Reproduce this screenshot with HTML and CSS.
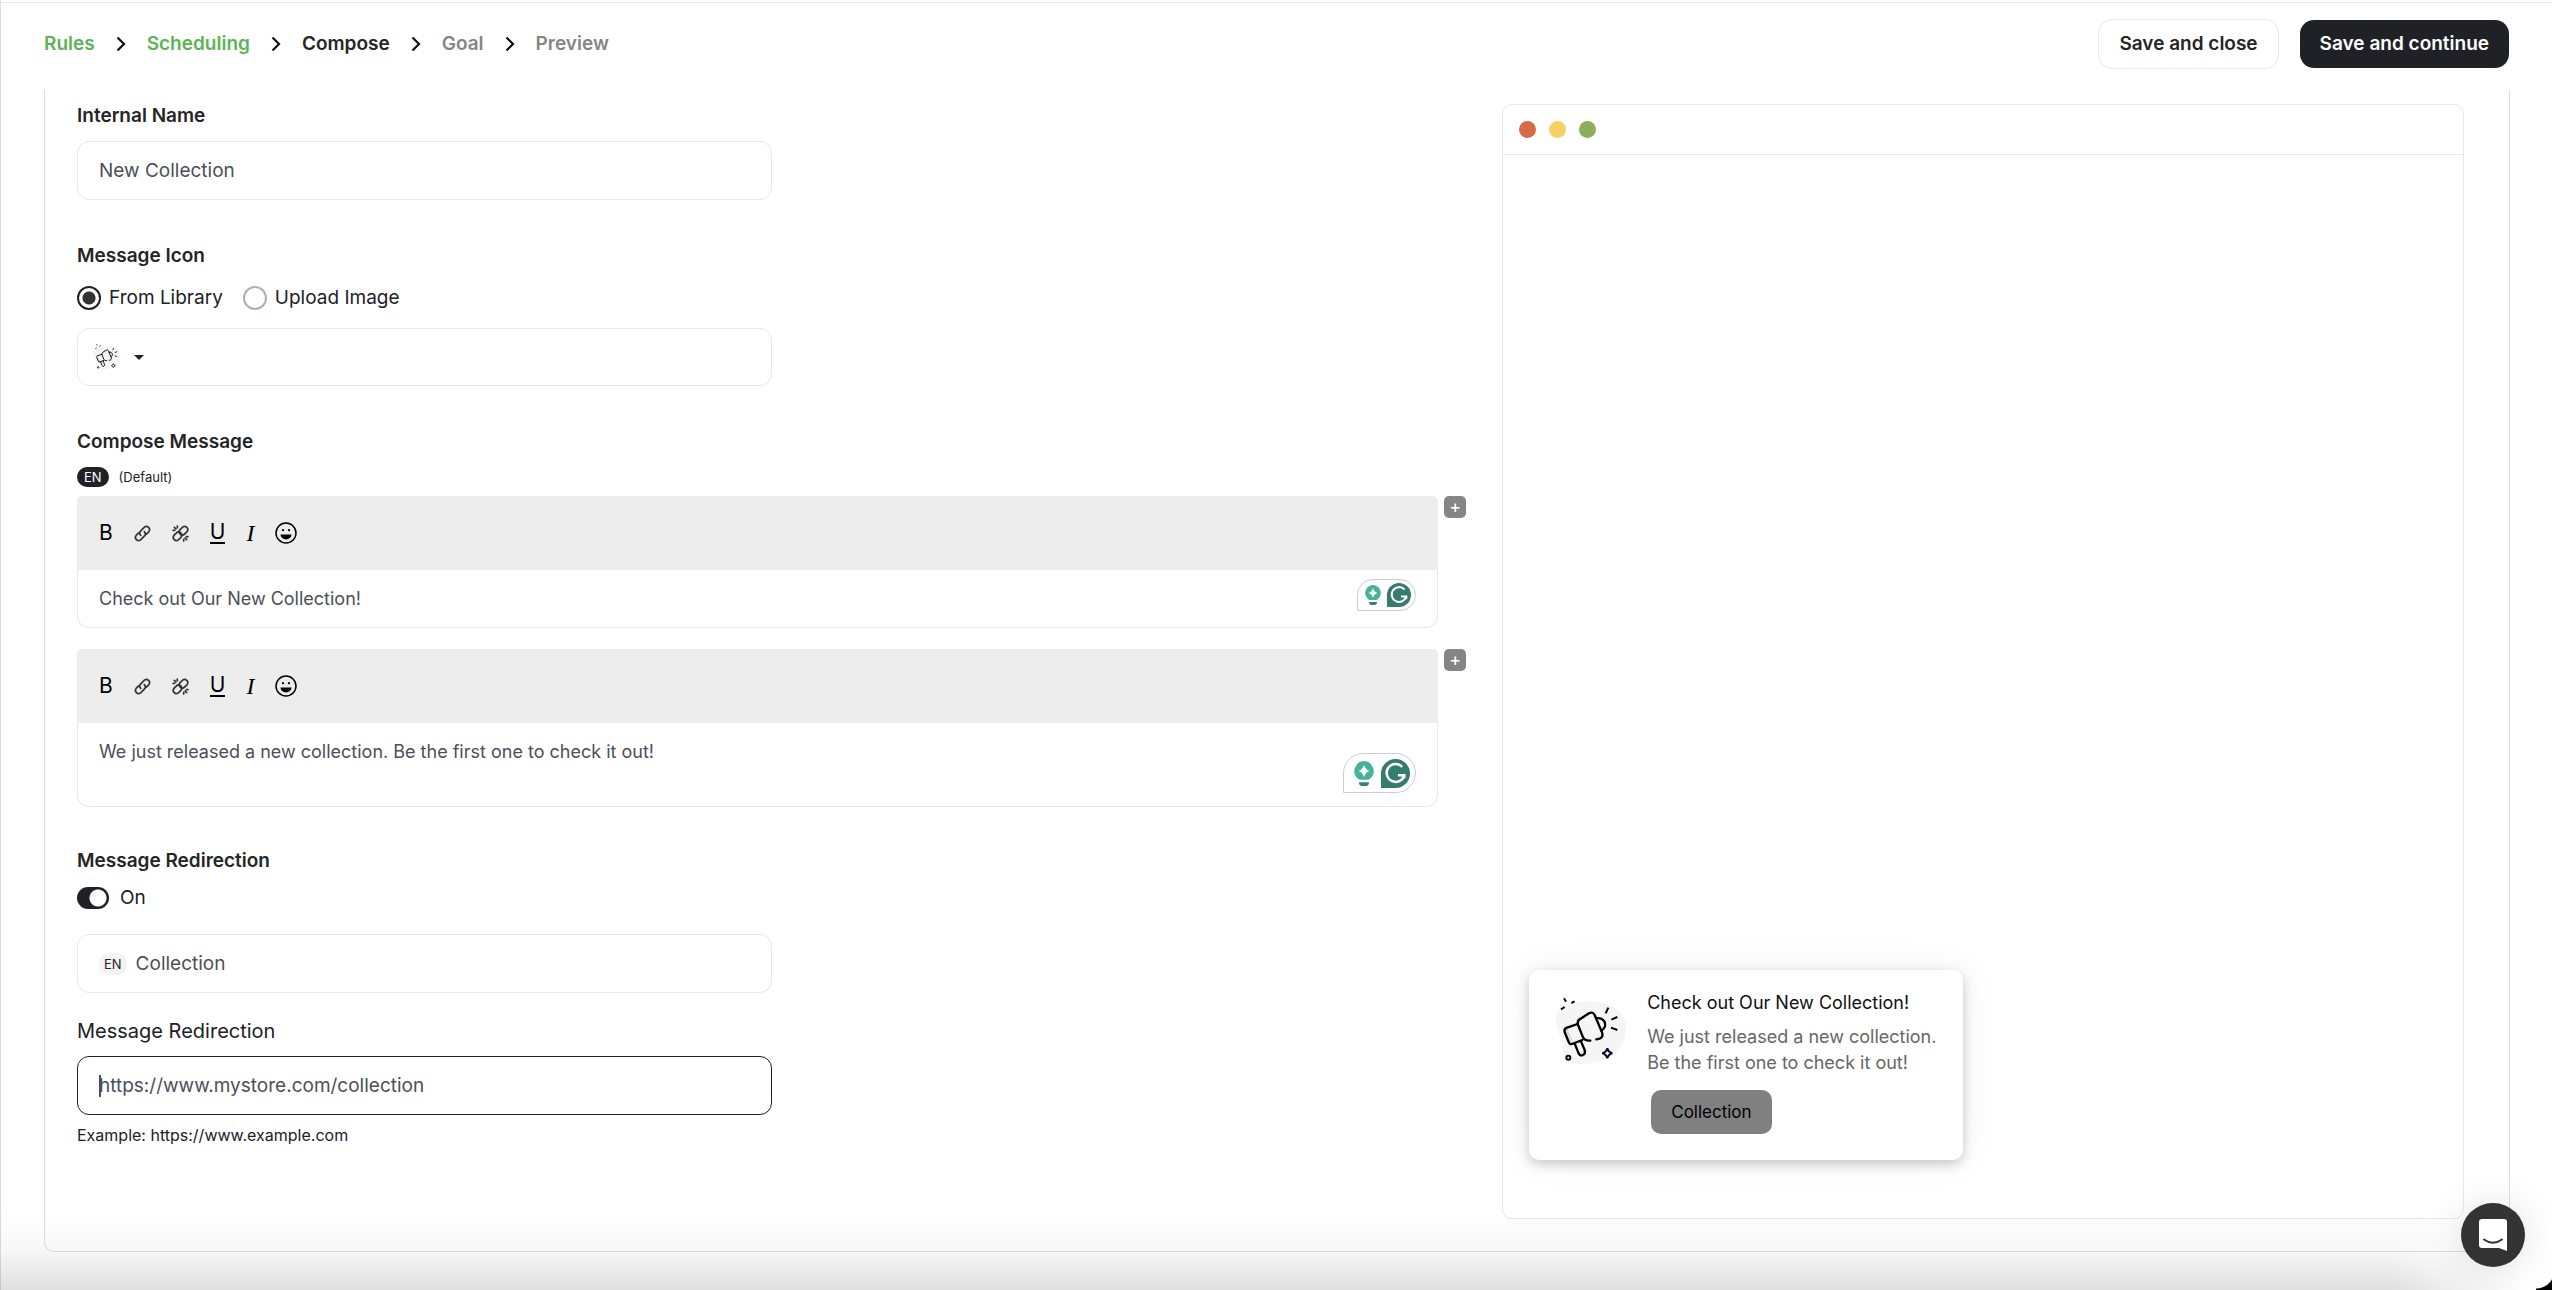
FILE: index.html
```html
<!DOCTYPE html>
<html lang="en">
<head>
    <meta charset="UTF-8">
    <meta name="viewport" content="width=device-width, initial-scale=1.0">
    <title>Compose Message</title>

    <link rel="stylesheet" href="styles.css">
</head>
<body>
    <!-- shared icons -->
    <svg class="sprite" aria-hidden="true">
        <symbol id="chevron" viewBox="0 0 10 16">
            <path d="M1.500 1.500L8 8L1.500 14.500" fill="none" stroke="#111" stroke-width="2.200"/>
        </symbol>
        <symbol id="megaphone" viewBox="168 138 216 210">
            <path d="M171 215C170 180 192 160 230 157C262 153 300 154 325 163C362 178 384 205 381 240C378 285 350 320 312 330C280 340 245 347 220 340C192 332 192 312 192 288C190 262 172 245 171 215Z" fill="#f5f5f5"/>
            <path d="M204 234L222 272L212 276L200 242Z" fill="#ddd"/>
            <g fill="none" stroke="#000" stroke-width="7" stroke-linecap="round" stroke-linejoin="round">
                <path d="M236 222L204 233Q194 237 197 246L209 276Q212 285 222 281L250 270"/>
                <path d="M236 222Q235 211 245 206L270 190Q281 184 287 195L309 247Q314 262 302 266L292 268"/>
                <path d="M236 222L252 262Q257 273 274 272"/>
                <path d="M291 205Q308 202 317 216Q323 232 307 242"/>
                <path d="M228 283L238 308Q243 319 252 315Q260 311 257 300L246 274"/>
            </g>
            <g fill="none" stroke="#000" stroke-width="6">
                <path d="M320 190L328 173M337 209L355 201M336 233L355 240"/>
            </g>
            <g fill="none" stroke="#0b0b26" stroke-width="6">
                <path d="M195 145L201 155M217 159L227 154M186 178L197 171"/>
                <circle cx="208" cy="323" r="6"/>
                <path d="M325 295Q328 307 340 310Q328 313 325 325Q322 313 310 310Q322 307 325 295Z" stroke-width="6"/>
            </g>
        </symbol>
        <symbol id="link" viewBox="0 0 16 16">
            <g fill="none" stroke="#333" stroke-width="1.600" stroke-linecap="round">
                <path d="M6.300 9.700A3 3 0 0 1 6.300 5.500L9.800 2A3 3 0 0 1 14 6.200L11.700 8.500"/>
                <path d="M9.700 6.300A3 3 0 0 1 9.700 10.500L6.200 14A3 3 0 0 1 2 9.800L4.300 7.500"/>
            </g>
        </symbol>
        <symbol id="unlink" viewBox="0 0 16 16">
            <g fill="none" stroke="#333" stroke-width="1.600" stroke-linecap="round">
                <path d="M7.600 4.400L10 2A3 3 0 0 1 14.200 6.200L11.800 8.600A2.600 2.600 0 0 1 7.600 8.400A2.600 2.600 0 0 1 7.600 4.400"/>
                <path d="M8.400 11.600L6 14A3 3 0 0 1 1.800 9.800L4.200 7.400A2.600 2.600 0 0 1 8.400 7.600A2.600 2.600 0 0 1 8.400 11.600"/>
                <path d="M1 5H2.500M2.200 2.200L3.600 3.600M5 1V2.500M15 11H13.500M13.800 13.800L12.400 12.400M11 15V13.500"/>
            </g>
        </symbol>
        <symbol id="smile" viewBox="0 0 22 22">
            <circle cx="11" cy="11" r="10" fill="none" stroke="#000" stroke-width="1.500"/>
            <path d="M5.500 12.500H16.500A5.500 5 0 0 1 5.500 12.500Z"/>
            <circle cx="8" cy="8.200" r="1.100"/>
            <circle cx="14" cy="8.200" r="1.100"/>
        </symbol>
        <symbol id="bulb" viewBox="0 0 16 20">
            <path d="M8 0A8 8 0 0 1 13 14Q12 15 11 15H5Q4 15 3 14A8 8 0 0 1 8 0Z" fill="#44b39a"/>
            <path d="M8 3Q9 7 12.500 8Q9 9 8 13Q7 9 3.500 8Q7 7 8 3Z" fill="#fff"/>
            <path d="M4 17H12Q12 20 9.500 20H6.500Q4 20 4 17Z" fill="#35806f"/>
        </symbol>
        <symbol id="grammar" viewBox="0 0 24 24">
            <path d="M0 24V12A12 12 0 1 1 12 24Z" fill="#367c6e"/>
            <path d="M17.500 6.500A7.400 7.400 0 1 0 19.200 13.500H14M19.300 13.500V16" fill="none" stroke="#fff" stroke-width="2"/>
        </symbol>
    </svg>

    <header class="topbar">
        <nav class="steps">
            <a href="#" class="done">Rules</a>
            <svg><use href="#chevron"/></svg>
            <a href="#" class="done">Scheduling</a>
            <svg><use href="#chevron"/></svg>
            <a href="#" class="current">Compose</a>
            <svg><use href="#chevron"/></svg>
            <a href="#">Goal</a>
            <svg><use href="#chevron"/></svg>
            <a href="#">Preview</a>
        </nav>
        <div class="actions">
            <button type="button" class="btn">Save and close</button>
            <button type="submit" form="messageForm" class="btn btn-dark">Save and continue</button>
        </div>
    </header>

    <main class="panel">
        <form id="messageForm">
            <section class="group">
                <label class="title" for="internalName">Internal Name</label>
                <input type="text" class="field" id="internalName" value="New Collection">
            </section>

            <section class="group">
                <h2 class="title">Message Icon</h2>
                <div class="radios">
                    <input type="radio" name="icon" id="library" checked>
                    <label for="library">From Library</label>
                    <input type="radio" name="icon" id="upload">
                    <label for="upload">Upload Image</label>
                </div>
                <button type="button" class="field icon-picker" aria-label="Choose icon">
                    <svg class="picked"><use href="#megaphone"/></svg>
                    <span class="caret"></span>
                </button>
            </section>

            <section class="group compose-group">
                <h2 class="title">Compose Message</h2>
                <div class="language"><span class="pill">EN</span> (Default)</div>

                <div class="editor-row">
                    <div class="editor">
                        <div class="toolbar">
                            <button type="button">B</button>
                            <button type="button" aria-label="Link"><svg class="small"><use href="#link"/></svg></button>
                            <button type="button" aria-label="Unlink"><svg class="small"><use href="#unlink"/></svg></button>
                            <button type="button" class="underline">U</button>
                            <button type="button" class="italic">I</button>
                            <button type="button" aria-label="Emoji"><svg class="emoji"><use href="#smile"/></svg></button>
                        </div>
                        <input type="text" class="message" aria-label="Message title" value="Check out Our New Collection!">
                        <div class="checker">
                            <svg class="bulb"><use href="#bulb"/></svg>
                            <svg class="grammar"><use href="#grammar"/></svg>
                        </div>
                    </div>
                    <button type="button" class="add" aria-label="Add">+</button>
                </div>

                <div class="editor-row">
                    <div class="editor">
                        <div class="toolbar">
                            <button type="button">B</button>
                            <button type="button" aria-label="Link"><svg class="small"><use href="#link"/></svg></button>
                            <button type="button" aria-label="Unlink"><svg class="small"><use href="#unlink"/></svg></button>
                            <button type="button" class="underline">U</button>
                            <button type="button" class="italic">I</button>
                            <button type="button" aria-label="Emoji"><svg class="emoji"><use href="#smile"/></svg></button>
                        </div>
                        <textarea class="message" aria-label="Message text">We just released a new collection. Be the first one to check it out!</textarea>
                        <div class="checker large">
                            <svg class="bulb"><use href="#bulb"/></svg>
                            <svg class="grammar"><use href="#grammar"/></svg>
                        </div>
                    </div>
                    <button type="button" class="add" aria-label="Add">+</button>
                </div>
            </section>

            <section class="group">
                <h2 class="title">Message Redirection</h2>
                <div class="switch">
                    <input type="checkbox" id="redirect" checked>
                    <label for="redirect">On</label>
                </div>
                <div class="field tagged">
                    <span class="tag">EN</span>
                    <input type="text" aria-label="Button text" value="Collection">
                </div>
                <label class="subtitle" for="url">Message Redirection</label>
                <input type="text" class="field active" id="url" placeholder="https://www.mystore.com/collection">
                <p class="hint">Example: https://www.example.com</p>
            </section>
        </form>

        <aside class="preview">
            <div class="dots">
                <span class="red"></span>
                <span class="yellow"></span>
                <span class="green"></span>
            </div>
            <div class="popup">
                <svg class="popup-icon"><use href="#megaphone"/></svg>
                <div>
                    <h3>Check out Our New Collection!</h3>
                    <p>We just released a new collection. Be the first one to check it out!</p>
                    <button type="button">Collection</button>
                </div>
            </div>
        </aside>
    </main>

    <div class="fade"></div>
    <div class="corner"></div>
    <button type="button" class="chat" aria-label="Open chat">
        <svg viewBox="0 0 28 32">
            <path d="M3 0H25Q28 0 28 3V32L20 29H3Q0 29 0 26V3Q0 0 3 0Z" fill="#fff"/>
            <path d="M5 20.500Q14 27 23 20.500" fill="none" stroke="#333" stroke-width="2" stroke-linecap="round"/>
        </svg>
    </button>
</body>
</html>
```
FILE: styles.css
```css
* {
    margin: 0;
    padding: 0;
    box-sizing: border-box;
}

body {
    display: flex;
    flex-direction: column;
    min-height: 100vh;
    padding-top: 2px;
    border-left: 1px solid #ddd;
    background-color: #fff;
    color: #202127;
    font-family: Inter, sans-serif;
    font-size: 18px;
    line-height: 24px;
}

input, button, textarea {
    font: inherit;
    color: inherit;
}

button {
    border: none;
    background: none;
    cursor: pointer;
}

svg {
    display: block;
}

.sprite {
    position: absolute;
    width: 0;
    height: 0;
}

/* header */
.topbar {
    display: flex;
    justify-content: space-between;
    align-items: center;
    height: 88px;
    padding: 0 43px 6px;
    border-top: 1px solid #e8e8e8;
}

.steps, .actions {
    display: flex;
    align-items: center;
    gap: 21px;
}

.steps a {
    color: #858585;
    font-size: 19px;
    font-weight: 600;
    text-decoration: none;
}

.steps svg {
    width: 10px;
    height: 16px;
}

.steps .done {
    color: #5cb456;
}

.steps .current {
    color: #252525;
}

.btn {
    height: 50px;
    padding: 0 20px;
    border: 1px solid #e8e8e8;
    border-radius: 14px;
    color: #252525;
    font-size: 19px;
    font-weight: 600;
}

.btn-dark {
    height: 48px;
    border: none;
    background-color: #202127;
    color: #fff;
}

/* main panel */
.panel {
    display: grid;
    grid-template-columns: 13fr 9fr;
    gap: 36px;
    flex-grow: 1;
    margin: 0 42px 38px 43px;
    padding: 14px 45px 32px 32px;
    border: 1px solid #ddd;
    border-top: none;
    border-radius: 0 0 10px 10px;
}

.group {
    display: flex;
    flex-direction: column;
    align-items: flex-start;
    margin-bottom: 44px;
}

.compose-group {
    margin-bottom: 21px;
}

.title {
    margin-bottom: 13px;
    color: #252525;
    font-size: 19px;
    font-weight: 600;
}

.field {
    width: 50%;
    height: 59px;
    padding: 0 21px;
    border: 1px solid #e8e8e8;
    border-radius: 12px;
    outline: none;
    background-color: #fff;
    color: #4b5058;
    font-size: 19px;
}

.radios {
    display: flex;
    align-items: center;
    margin: 5px 0 18px;
    font-size: 19px;
}

.radios input {
    appearance: none;
    width: 24px;
    height: 24px;
    border: 2px solid #aab0bc;
    border-radius: 50%;
}

.radios input:checked {
    border-color: #202127;
    background: radial-gradient(circle, #333 6px, #fff 7px);
}

.radios label {
    margin: 0 20px 0 8px;
}

.icon-picker {
    display: flex;
    align-items: center;
    gap: 13px;
    height: 58px;
    padding: 0 15px;
}

.picked {
    width: 28px;
    height: 28px;
}

.caret {
    border: 5px solid transparent;
    border-top-color: #202127;
    border-bottom: none;
}

/* editors */
.language {
    display: flex;
    align-items: center;
    gap: 10px;
    height: 20px;
    margin-bottom: 9px;
    font-size: 13px;
}

.pill {
    padding: 0 7px;
    border-radius: 10px;
    background-color: #202127;
    color: #fff;
    line-height: 20px;
}

.editor-row {
    display: flex;
    align-items: flex-start;
    gap: 6px;
    width: 100%;
    margin-bottom: 21px;
}

.editor {
    position: relative;
    flex-grow: 1;
}

.toolbar {
    display: flex;
    align-items: center;
    height: 74px;
    padding-left: 22px;
    border-radius: 5px 5px 0 0;
    background-color: #ededed;
    color: #000;
}

.toolbar button {
    margin-right: 21px;
    font-size: 21px;
}

.toolbar .underline {
    border-bottom: 2px solid #000;
    line-height: 20px;
}

.toolbar .italic {
    font-family: "Liberation Serif", serif;
    font-size: 24px;
    font-style: italic;
}

.toolbar .small {
    width: 17px;
    height: 17px;
}

.toolbar .emoji {
    width: 22px;
    height: 22px;
}

.message {
    display: block;
    width: 100%;
    height: 58px;
    padding: 0 21px;
    border: 1px solid #e8e8e8;
    border-top: none;
    border-radius: 0 0 12px 12px;
    outline: none;
    color: #4b5058;
}

textarea.message {
    height: 84px;
    padding-top: 17px;
    resize: none;
}

.checker {
    position: absolute;
    right: 22px;
    bottom: 17px;
    display: flex;
    align-items: center;
    justify-content: space-between;
    width: 59px;
    height: 32px;
    padding: 0 4px 0 7px;
    border: 1px solid #ccccd9;
    border-radius: 16px 16px 16px 0;
    background-color: #fff;
}

.checker .bulb {
    width: 16px;
    height: 20px;
}

.checker .grammar {
    width: 24px;
    height: 24px;
}

.checker.large {
    bottom: 14px;
    width: 73px;
    height: 40px;
    padding: 0 5px 0 10px;
    border-radius: 20px 20px 20px 0;
}

.checker.large .bulb {
    width: 20px;
    height: 25px;
}

.checker.large .grammar {
    width: 29px;
    height: 29px;
}

.add {
    width: 22px;
    height: 22px;
    border-radius: 5px;
    background-color: #858585;
    color: #fff;
    line-height: 22px;
}

/* redirection */
.switch {
    display: flex;
    align-items: center;
    gap: 11px;
    margin-bottom: 24px;
    font-size: 19px;
}

.switch input {
    appearance: none;
    width: 32px;
    height: 22px;
    border-radius: 11px;
    background: radial-gradient(circle at 21px 11px, #fff 8px, #202127 9px);
}

.tagged {
    display: flex;
    align-items: center;
    gap: 9px;
}

.tagged input {
    flex-grow: 1;
    border: none;
    outline: none;
}

.tag {
    padding: 0 5px;
    border-radius: 9px;
    background-color: #f3f3f3;
    color: #252525;
    font-size: 13px;
    line-height: 22px;
}

.subtitle {
    margin: 26px 0 13px;
    font-size: 20px;
}

.active {
    border-color: #202127;
    /* text cursor */
    background: linear-gradient(#4b5058, #4b5058) 21px center / 2px 22px no-repeat #fff;
}

.active::placeholder {
    color: #4b5058;
}

.hint {
    margin-top: 8px;
    font-size: 16px;
}

/* preview window */
.preview {
    display: flex;
    flex-direction: column;
    border: 1px solid #e8e8e8;
    border-radius: 10px;
}

.dots {
    display: flex;
    align-items: center;
    gap: 13px;
    height: 50px;
    padding-left: 16px;
    border-bottom: 1px solid #e8e8e8;
}

.dots span {
    width: 17px;
    height: 17px;
    border-radius: 50%;
}

.dots .red {
    background-color: #d76a48;
}

.dots .yellow {
    background-color: #f7d060;
}

.dots .green {
    background-color: #8fae5d;
}

.popup {
    display: flex;
    gap: 20px;
    width: 434px;
    margin: auto auto 58px 26px;
    padding: 20px 20px 26px 26px;
    border-radius: 10px;
    background-color: #fff;
    box-shadow: 0 4px 12px rgba(0, 0, 0, 0.2), 0 0 40px rgba(0, 0, 0, 0.06);
}

.popup-icon {
    flex-shrink: 0;
    width: 72px;
    height: 70px;
    margin-top: 6px;
}

.popup h3 {
    margin-bottom: 8px;
    color: #111;
    font-size: 18px;
    font-weight: 400;
    line-height: 26px;
}

.popup p {
    color: #666;
    line-height: 26px;
}

.popup button {
    height: 44px;
    margin: 14px 0 0 4px;
    padding: 0 20px;
    border-radius: 10px;
    background-color: #808080;
    color: #000;
    font-size: 17px;
}

.fade {
    position: fixed;
    right: 0;
    bottom: 0;
    left: 0;
    height: 80px;
    background: linear-gradient(transparent, rgba(0, 0, 0, 0.03) 50%, rgba(0, 0, 0, 0.12));
    mask-image: linear-gradient(to left, transparent 30px, #000 160px);
    pointer-events: none;
}

/* rounded window corner */
.corner {
    position: fixed;
    right: 0;
    bottom: 0;
    width: 16px;
    height: 20px;
    background: radial-gradient(circle at 0 0, transparent 18px, #000 19px);
    pointer-events: none;
}

.chat {
    position: fixed;
    right: 27px;
    bottom: 23px;
    display: flex;
    justify-content: center;
    align-items: center;
    width: 64px;
    height: 64px;
    border-radius: 50%;
    background-color: #333;
    box-shadow: 0 2px 40px rgba(0, 0, 0, 0.12);
}

.chat svg {
    width: 28px;
    height: 32px;
}
```
